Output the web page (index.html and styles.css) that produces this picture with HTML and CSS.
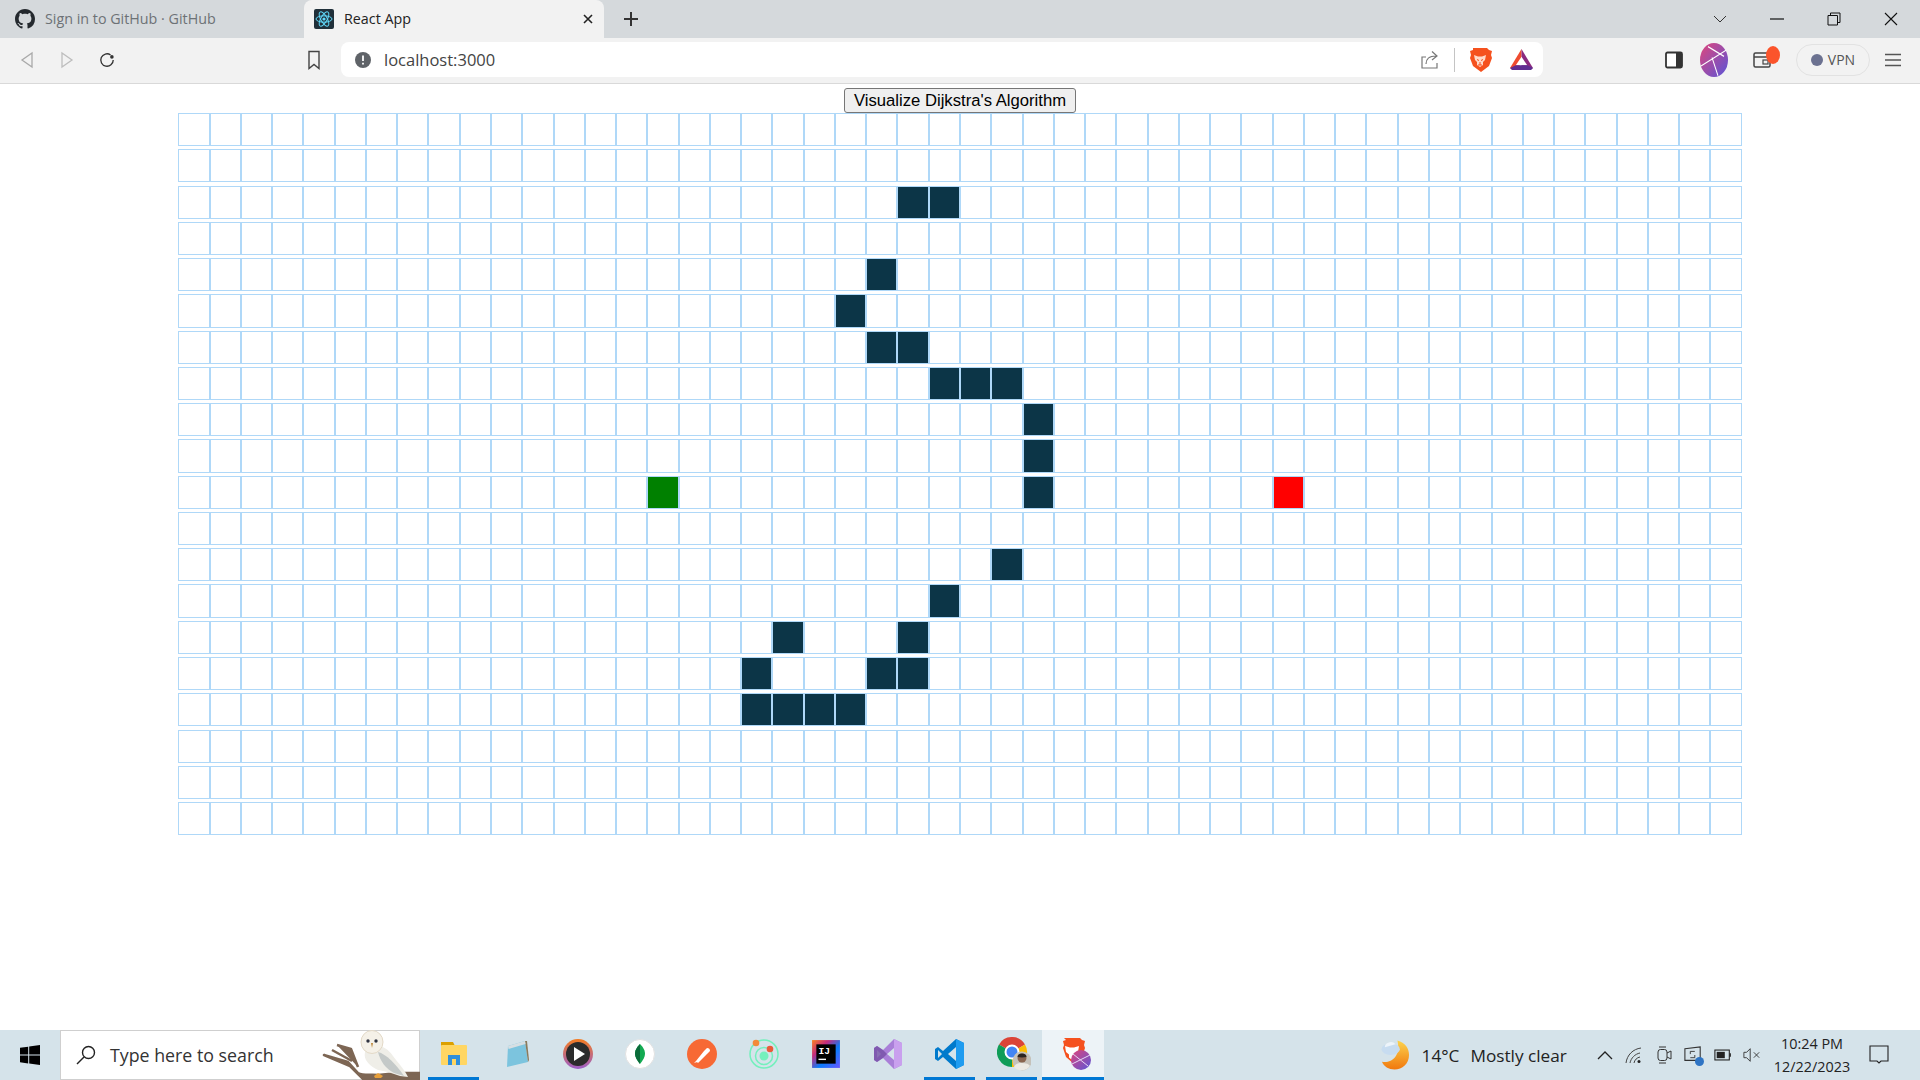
FILE: index.html
```html
<!DOCTYPE html>
<html lang="en">
<head>
  <meta charset="UTF-8">
  <meta name="viewport" content="width=device-width, initial-scale=1.0">
  <title>React App</title>
  <link rel="stylesheet" href="styles.css">
</head>
<body>
  <!-- Browser tabs -->
  <header class="tab-strip">
    <div class="tab">
      <svg class="favicon" viewBox="0 0 16 16"><path fill="#24292e" d="M8 0C3.58 0 0 3.58 0 8c0 3.54 2.29 6.53 5.47 7.59.4.07.55-.17.55-.38 0-.19-.01-.82-.01-1.49-2.01.37-2.53-.49-2.69-.94-.09-.23-.48-.94-.82-1.13-.28-.15-.68-.52-.01-.53.63-.01 1.08.58 1.23.82.72 1.21 1.87.87 2.33.66.07-.52.28-.87.51-1.07-1.78-.2-3.64-.89-3.64-3.95 0-.87.31-1.59.82-2.15-.08-.2-.36-1.02.08-2.12 0 0 .67-.21 2.2.82.64-.18 1.32-.27 2-.27s1.36.09 2 .27c1.53-1.04 2.2-.82 2.2-.82.44 1.1.16 1.92.08 2.12.51.56.82 1.27.82 2.15 0 3.07-1.87 3.75-3.65 3.95.29.25.54.73.54 1.48 0 1.07-.01 1.93-.01 2.2 0 .21.15.46.55.38A8.01 8.01 0 0 0 16 8c0-4.42-3.58-8-8-8z"/></svg>
      <span class="tab-title">Sign in to GitHub · GitHub</span>
    </div>
    <div class="tab tab-active">
      <svg class="favicon" viewBox="0 0 20 20"><rect width="20" height="20" rx="2" fill="#20303a"/><g fill="none" stroke="#61dafb" stroke-width="1"><ellipse cx="10" cy="10" rx="8" ry="3.2"/><ellipse cx="10" cy="10" rx="8" ry="3.2" transform="rotate(60 10 10)"/><ellipse cx="10" cy="10" rx="8" ry="3.2" transform="rotate(120 10 10)"/></g><circle cx="10" cy="10" r="1.6" fill="#61dafb"/></svg>
      <span class="tab-title">React App</span>
      <svg class="tab-close" viewBox="0 0 10 10"><path d="M1 1l8 8M9 1l-8 8" stroke="#222" stroke-width="1.6"/></svg>
    </div>
    <svg class="new-tab" viewBox="0 0 16 16"><path d="M8 1v14M1 8h14" stroke="#333" stroke-width="2"/></svg>
    <div class="window-controls">
      <svg viewBox="0 0 14 14"><path d="M1 4l6 6 6-6" fill="none" stroke="#333"/></svg>
      <svg viewBox="0 0 14 14"><path d="M0 7h14" stroke="#111" stroke-width="1.2"/></svg>
      <svg viewBox="0 0 14 14"><path d="M1 3.5h9.5V13H1zM3.5 3.5V1H13v9.5h-2.5" fill="none" stroke="#111"/></svg>
      <svg viewBox="0 0 14 14"><path d="M1 1l12 12M13 1L1 13" stroke="#111" stroke-width="1.1"/></svg>
    </div>
  </header>

  <!-- Address bar and toolbar -->
  <nav class="toolbar">
    <div class="nav-buttons">
      <svg viewBox="0 0 16 18"><path d="M13 2v14L3 9z" fill="none" stroke="#a9a9a9" stroke-width="1.3"/></svg>
      <svg viewBox="0 0 16 18"><path d="M3 2v14l10-7z" fill="none" stroke="#bdbdbd" stroke-width="1.3"/></svg>
      <svg viewBox="0 0 18 18"><path d="M16 9A7 7 0 1 1 13 3.3" fill="none" stroke="#333" stroke-width="1.5"/><circle cx="14.5" cy="5.5" r="2" fill="#333"/></svg>
    </div>
    <svg class="bookmark" viewBox="0 0 14 20"><path d="M2 1.5h10v17l-5-4-5 4z" fill="none" stroke="#444" stroke-width="1.4"/></svg>
    <div class="url-bar">
      <svg class="url-info" viewBox="0 0 16 16"><circle cx="8" cy="8" r="8" fill="#5f6368"/><path d="M8 3.5V9M8 10.8v1.7" stroke="#fff" stroke-width="1.8"/></svg>
      <span class="url-text">localhost:3000</span>
      <div class="url-actions">
        <svg class="url-share" viewBox="0 0 20 20"><path d="M6 7H2v11h15v-5" fill="none" stroke="#777" stroke-width="1.2"/><path d="M6 14c0-5 3-8 10-8M12 1.5L17 6l-5 4" fill="none" stroke="#777" stroke-width="1.2"/></svg>
        <span class="url-divider"></span>
        <svg class="url-lion" viewBox="0 0 24 24"><path d="M5 0h14l2 2 3 1-1 4 1 3-3 8-8 6-8-6-3-8 1-3-1-4 3-1z" fill="#f5511e"/><path d="M6 7l4 1.5h4L18 7l-1 5-2 2v3l-3 2-3-2v-3l-2-2z" fill="#ffd9c9"/><path d="M9 11.5l2 1M15 11.5l-2 1M12 14v3M10 17h4" stroke="#f5511e" stroke-width="1" fill="none"/></svg>
        <svg class="url-bat" viewBox="0 0 24 22"><path d="M12 0L0 20l3 2h6l3-14z" fill="#ef4b2f"/><path d="M12 0l12 20-3 2h-9V8z" fill="#8b2a7f"/><path d="M12 8l6 9H6z" fill="#fff"/><path d="M6 17h12l6 3-2 2H2l-2-2z" fill="#5f2d91"/></svg>
      </div>
    </div>
    <div class="toolbar-right">
      <svg class="panel-icon" viewBox="0 0 18 18"><rect x="1" y="1.5" width="16" height="15" rx="1.5" fill="#fff" stroke="#333" stroke-width="1.8"/><rect x="11" y="1.5" width="6" height="15" fill="#333"/></svg>
      <svg class="profile-icon" viewBox="0 0 28 28" preserveAspectRatio="none"><defs><linearGradient id="profileFill" x1="0" y1="0" x2="1" y2="1"><stop offset="0" stop-color="#e0457b"/><stop offset="1" stop-color="#5a55d8"/></linearGradient></defs><circle cx="14" cy="14" r="14" fill="url(#profileFill)"/><path d="M1 19L26 6M8 3l16 8M12 12l6 15" stroke="#fff" stroke-width="1" fill="none"/></svg>
      <div class="wallet">
        <svg viewBox="0 0 18 18"><rect x="1" y="2" width="16" height="14" rx="1.5" fill="none" stroke="#444" stroke-width="1.5"/><path d="M1 6h16" stroke="#444" stroke-width="1.5"/><rect x="10" y="9" width="5" height="4" fill="none" stroke="#444" stroke-width="1.2"/></svg>
        <span class="wallet-badge"></span>
      </div>
      <div class="vpn-pill"><span class="vpn-dot"></span>VPN</div>
      <svg class="menu-icon" viewBox="0 0 18 14"><path d="M1 1.5h16M1 7h16M1 12.5h16" stroke="#555" stroke-width="1.5"/></svg>
    </div>
  </nav>

  <!-- Page content -->
  <main class="page">
    <button class="visualize-btn">Visualize Dijkstra's Algorithm</button>
    <div class="grid" id="grid"></div>
  </main>

  <!-- Windows taskbar -->
  <footer class="taskbar">
    <div class="start-btn">
      <svg viewBox="0 0 20 20"><path fill="#000" d="M0 2.8l8.2-1.1v7.9H0zM9.2 1.5L20 0v9.6H9.2zM0 10.5h8.2v7.9L0 17.2zM9.2 10.5H20V20L9.2 18.5z"/></svg>
    </div>
    <div class="search-box">
      <svg class="search-icon" viewBox="0 0 20 20"><circle cx="12.5" cy="7.5" r="6" fill="none" stroke="#222" stroke-width="1.4"/><path d="M8 12l-7 7" stroke="#222" stroke-width="1.4"/></svg>
      <span class="search-text">Type here to search</span>
      <svg class="owl" viewBox="0 0 100 50">
        <path d="M4 25l24 7 10 11c6 3 14 1 20 2l20-2h22v7H44L30 36zM12 20l20 11M17 15l14 4 7 18" fill="#7d6654" stroke="#7d6654" stroke-width="2.5" stroke-linejoin="round"/>
        <path d="M45 22c6-10 20-8 28 4 6 8 12 14 15 21l-8-1-12-4-10-2c-8-4-15-10-13-18z" fill="#efeee8"/>
        <path d="M58 22c8 2 18 12 26 24l-10-3c-8-4-14-12-16-21z" fill="#c4c9c8"/>
        <ellipse cx="52" cy="12" rx="11" ry="11.5" fill="#f5f1e8" stroke="#e3d9c7"/>
        <circle cx="48" cy="11" r="1.7" fill="#2f3340"/>
        <circle cx="56" cy="11" r="1.7" fill="#2f3340"/>
        <path d="M51 13l1 5 1-5z" fill="#bd8a3f"/>
        <path d="M54 46l4-3 5 3-2 2h-6z" fill="#e8a03a"/>
      </svg>
    </div>
    <div class="task-icons">
      <div class="task-icon task-open">
        <svg viewBox="0 0 30 30"><path d="M2 3h12l2 4H2z" fill="#dca000"/><rect x="2" y="6" width="26" height="20" rx="1" fill="#ffd663"/><path d="M9 26V16h12v10h-4v-6h-4v6z" fill="#2f8fdc"/></svg>
      </div>
      <div class="task-icon">
        <svg viewBox="0 0 30 30"><path d="M7 7l17-5 3 21-21 5z" fill="#7cc4de"/><path d="M24 2l3 21 1-2-2-19z" fill="#8a7a5c"/><path d="M7 7l17-5 .5 3L7.5 10z" fill="#d7dfe3"/></svg>
      </div>
      <div class="task-icon">
        <svg viewBox="0 0 30 30"><defs><linearGradient id="playRing" x1="0" y1="0" x2="0" y2="1"><stop offset="0" stop-color="#f47b20"/><stop offset="1" stop-color="#9c5fc9"/></linearGradient></defs><circle cx="15" cy="15" r="15" fill="url(#playRing)"/><circle cx="15" cy="15" r="12" fill="#2b2b2b"/><path d="M11 8l11 7-11 7z" fill="#fff"/></svg>
      </div>
      <div class="task-icon">
        <svg viewBox="0 0 30 30"><circle cx="15" cy="15" r="14.5" fill="#fff" stroke="#e2e2e2"/><path d="M15 5c4 4 5 7 5 10s-2 6-5 10c-3-4-5-7-5-10s1-6 5-10z" fill="#13aa52"/><path d="M15 5c-4 4-5 7-5 10s2 6 5 10z" fill="#0b6b3a"/></svg>
      </div>
      <div class="task-icon">
        <svg viewBox="0 0 30 30"><circle cx="15" cy="15" r="15" fill="#f76935"/><path d="M9 22l8-10 3-3c2 0 3 1 3 3l-3 3-9 9zM7 24l2-2 1 1z" fill="#fff"/></svg>
      </div>
      <div class="task-icon">
        <svg viewBox="0 0 30 30"><circle cx="15" cy="15" r="14" fill="none" stroke="#74f0bd" stroke-width="1.5"/><circle cx="15" cy="17" r="8.5" fill="none" stroke="#74f0bd" stroke-width="1.5"/><circle cx="15" cy="17" r="4.5" fill="#74f0bd"/><circle cx="7" cy="4" r="3.3" fill="#f28a3a"/><circle cx="21" cy="10" r="3.3" fill="#ea5b3a"/></svg>
      </div>
      <div class="task-icon">
        <svg viewBox="0 0 28 28"><defs><linearGradient id="ijEdge" x1="0" y1="0" x2="1" y2="1"><stop offset="0" stop-color="#fc801d"/><stop offset=".3" stop-color="#c42b7d"/><stop offset=".6" stop-color="#087cfa"/><stop offset="1" stop-color="#6b57ff"/></linearGradient></defs><rect width="26" height="26" x="1" y="1" fill="url(#ijEdge)"/><rect x="5" y="5" width="18" height="18" fill="#000"/><text class="ij-text" x="7" y="14">IJ</text><path d="M7 19h7" stroke="#fff" stroke-width="1.3"/></svg>
      </div>
      <div class="task-icon">
        <svg viewBox="0 0 30 30"><path d="M21 0l8 4v22l-8 4-11-11-6 4-3-2V9l3-2 6 4z" fill="#a97fd8"/><path d="M21 0l8 4v22l-8 4z" fill="#c9a0ee"/><path d="M4 11v8l4-4zM21 9l-7 6 7 6z" fill="#d5e3ea"/><path d="M1 9l3-2 6 4 4 4-4 4-6 4-3-2z" fill="#7551a6" opacity=".8"/></svg>
      </div>
      <div class="task-icon task-open">
        <svg viewBox="0 0 30 30"><path d="M21 0l8 4v22l-8 4L8 18l-5 4-3-2V10l3-2 5 4z" fill="#007acc"/><path d="M21 0l8 4v22l-8 4z" fill="#1f9cf0"/><path d="M21 8l-8 7 8 7z" fill="#d5e3ea"/><path d="M3 11v8l4-4z" fill="#d5e3ea"/></svg>
      </div>
      <div class="task-icon task-open">
        <svg class="chrome-icon" viewBox="0 0 34 34">
          <path d="M15 15L2 7.5A15 15 0 0 1 28 7.5z" fill="#db4437"/>
          <path d="M15 15L2 7.5A15 15 0 0 0 15 30z" fill="#0f9d58"/>
          <path d="M15 15L28 7.5A15 15 0 0 1 15 30z" fill="#fbbc05"/>
          <circle cx="15" cy="15" r="6.5" fill="#4285f4" stroke="#fff" stroke-width="2"/>
          <circle cx="25" cy="24" r="9.5" fill="#c5c2ba"/>
          <circle cx="25" cy="21" r="4.5" fill="#8a6650"/>
          <path d="M25 16.500c-3 0-4.500 1.500-4.500 3.500 3 .5 6 .5 9 0 0-2-1.500-3.500-4.500-3.500z" fill="#2a2421"/>
          <path d="M17 30c1-3 4-4 8-4s7 1 8 3c-3 5-12 6-16 1z" fill="#eceae4"/>
        </svg>
      </div>
      <div class="task-icon task-open task-active">
        <svg class="chrome-icon" viewBox="0 0 34 34">
          <path d="M6 1h16l2 2 3 1-1 4 1 3-3 9-8 7-8-7-3-9 1-3-1-4 3-1z" fill="#f5511e"/>
          <path d="M7 9l5 1.5h4l5-1.5-1 6-3 2.5v3L14 23l-3-2.5v-3L8 15z" fill="#fff"/>
          <circle cx="23" cy="23" r="10" fill="url(#profileFill)"/>
          <path d="M14 27l18-9M15 17l15 12" stroke="#e6d6f5" stroke-width="1"/>
        </svg>
      </div>
    </div>
    <div class="tray">
      <svg class="weather-icon" viewBox="0 0 30 32"><defs><linearGradient id="moonFill" x1="0" y1="0" x2="0" y2="1"><stop offset="0" stop-color="#fcd34d"/><stop offset="1" stop-color="#f1780d"/></linearGradient></defs><path d="M17 1c8 2 12 8 12 15 0 9-7 15-15 15C8 31 3 28 1 23c9 2 20-5 16-22z" fill="url(#moonFill)"/><ellipse cx="10" cy="10" rx="9.5" ry="6" fill="#c7dcf0"/><path d="M4 8a6 5 0 0 1 11-3z" fill="#edf4fa"/></svg>
      <span class="weather-temp">14°C</span>
      <span class="weather-text">Mostly clear</span>
      <svg class="tray-icon tray-chevron" viewBox="0 0 18 18"><path d="M2 13l7-7 7 7" fill="none" stroke="#222" stroke-width="1.3"/></svg>
      <svg class="tray-icon" viewBox="0 0 18 18"><path d="M1 17C2 9 8 3 16 2M5 17c1-5 5-9 10-10M9 17c.5-3 3-5.5 6-6" fill="none" stroke="#444"/><circle cx="14" cy="15.5" r="1.5" fill="#222"/></svg>
      <svg class="tray-icon" viewBox="0 0 18 18"><rect x="3" y="3.5" width="9" height="11" rx="2.5" fill="none" stroke="#333"/><path d="M12 7l4-2v8l-4-2M4 1h7M4 17h7" fill="none" stroke="#333"/></svg>
      <div class="tray-share">
        <svg class="tray-icon" viewBox="0 0 20 20"><path d="M1 3l17-2v15H1z" fill="none" stroke="#333" stroke-width="1.2"/><path d="M12 6H7v3M7 13h5v-3" fill="none" stroke="#333"/></svg>
        <span class="tray-dot"></span>
      </div>
      <svg class="tray-icon" viewBox="0 0 20 14"><rect x="1" y="1.5" width="16" height="11" fill="none" stroke="#222" stroke-width="1.2"/><rect x="3" y="3.5" width="9" height="7" fill="#222"/><path d="M18 5v4" stroke="#222" stroke-width="1.5"/></svg>
      <svg class="tray-icon" viewBox="0 0 20 18"><path d="M1 6h3l4-4v14l-4-4H1zM12 6l6 6M18 6l-6 6" fill="none" stroke="#333"/></svg>
      <div class="clock">
        <span>10:24 PM</span>
        <span>12/22/2023</span>
      </div>
      <svg class="notify-icon" viewBox="0 0 20 20"><path d="M1 1h18v15h-7l-2 2-2-2H1z" fill="none" stroke="#222" stroke-width="1.1"/></svg>
    </div>
  </footer>

  <script src="script.js"></script>
</body>
</html>
```

FILE: styles.css
```css
/* General styles */
* {
  box-sizing: border-box;
}

body {
  margin: 0;
  height: 100vh;
  display: flex;
  flex-direction: column;
  overflow: hidden;
  font-family: "Open Sans", "Noto Sans", sans-serif;
  background-color: #fff;
  color: #222;
}

svg {
  display: block;
  flex-shrink: 0;
}

/* Tab strip */
.tab-strip {
  height: 38px;
  display: flex;
  align-items: center;
  background-color: #d5d9dc;
}

.tab {
  width: 304px;
  height: 38px;
  display: flex;
  align-items: center;
  padding: 0 10px 0 15px;
  font-size: 14.3px;
  color: #6d7276;
}

.tab-active {
  width: 300px;
  padding-left: 10px;
  background-color: #f2f2f2;
  border-radius: 8px 8px 0 0;
  color: #222;
}

.favicon {
  width: 20px;
  height: 20px;
  margin-right: 10px;
}

.tab-title {
  white-space: nowrap;
  padding-bottom: 2px;
}

.tab-close {
  width: 10px;
  height: 10px;
  margin-left: auto;
  margin-right: 1px;
}

.new-tab {
  width: 16px;
  height: 16px;
  margin-left: 19px;
}

.window-controls {
  margin-left: auto;
  display: flex;
  align-items: center;
  gap: 43px;
  padding-right: 22px;
}

.window-controls svg {
  width: 14px;
  height: 14px;
}

/* Toolbar */
.toolbar {
  height: 46px;
  display: flex;
  align-items: center;
  padding: 0 0 2px 0;
  background-color: #f2f2f2;
  border-bottom: 1px solid #d9d9d9;
}

.nav-buttons {
  display: flex;
  align-items: center;
  gap: 24px;
  padding-left: 19px;
}

.nav-buttons svg {
  width: 16px;
  height: 18px;
}

.bookmark {
  width: 14px;
  height: 20px;
  margin-left: 192px;
}

.url-bar {
  width: 1202px;
  height: 35px;
  margin-left: 20px;
  padding: 0 10px 0 14px;
  display: flex;
  align-items: center;
  background-color: #fff;
  border-radius: 8px;
}

.url-info {
  width: 16px;
  height: 16px;
  margin-right: 13px;
}

.url-text {
  font-size: 16.5px;
  color: #444;
}

.url-actions {
  margin-left: auto;
  display: flex;
  align-items: center;
}

.url-share {
  width: 20px;
  height: 20px;
}

.url-divider {
  width: 1px;
  height: 24px;
  margin: 0 13px 0 14px;
  background-color: #c4c4c4;
}

.url-lion {
  width: 24px;
  height: 24px;
}

.url-bat {
  width: 23px;
  height: 21px;
  margin-left: 18px;
}

.toolbar-right {
  display: flex;
  align-items: center;
  margin-left: auto;
  padding-right: 18px;
}

.panel-icon {
  width: 18px;
  height: 18px;
}

.profile-icon {
  width: 28px;
  height: 34px;
  margin-left: 17px;
}

.wallet {
  position: relative;
  margin-left: 25px;
}

.wallet svg {
  width: 18px;
  height: 18px;
}

.wallet-badge {
  position: absolute;
  top: -5px;
  right: -9px;
  width: 14px;
  height: 18px;
  border-radius: 50%;
  background-color: #fb542b;
}

.vpn-pill {
  width: 74px;
  height: 32px;
  margin-left: 25px;
  display: flex;
  align-items: center;
  justify-content: center;
  gap: 5px;
  border: 1px solid #e2e2e2;
  border-radius: 16px;
  font-size: 14px;
  color: #555;
}

.vpn-dot {
  width: 12px;
  height: 12px;
  border-radius: 50%;
  background-color: #6b7190;
}

.menu-icon {
  width: 18px;
  height: 14px;
  margin-left: 14px;
}

/* Page content */
.page {
  flex: 1;
  display: flex;
  flex-direction: column;
  align-items: center;
  padding-top: 4px;
}

.visualize-btn {
  width: 232px;
  height: 25px;
  padding: 0;
  font-family: "Liberation Sans", Arial, sans-serif;
  font-size: 16.67px;
  color: #000;
  background-color: #efefef;
  border: 1px solid #767676;
  border-radius: 3px;
}

.grid {
  display: grid;
  grid-template-columns: repeat(50, 31.28px);
  grid-auto-rows: 33.2px;
  row-gap: 3.08px;
}

.node {
  border: 1px solid #afd8f8;
  background-color: #fff;
}

.node-wall {
  background-color: #0c3547;
}

.node-start {
  background-color: #008000;
}

.node-finish {
  background-color: #ff0000;
}

/* Taskbar */
.taskbar {
  height: 50px;
  display: flex;
  align-items: center;
  background-color: #d5e3ea;
}

.start-btn {
  width: 60px;
  display: flex;
  justify-content: center;
}

.start-btn svg {
  width: 20px;
  height: 20px;
}

.search-box {
  position: relative;
  width: 360px;
  height: 50px;
  display: flex;
  align-items: center;
  padding-left: 15px;
  background-color: #fff;
  border: 1px solid #cfcfcf;
}

.search-icon {
  width: 20px;
  height: 20px;
}

.search-text {
  margin-left: 14px;
  font-size: 17.8px;
  color: #333;
}

.owl {
  position: absolute;
  right: -1px;
  top: -1px;
  width: 100px;
  height: 50px;
}

.task-icons {
  display: flex;
  margin-left: 8px;
  gap: 11px;
}

.task-icon {
  width: 51px;
  height: 50px;
  display: flex;
  align-items: center;
  justify-content: center;
  border-bottom: 3px solid transparent;
}

.task-icon svg {
  width: 30px;
  height: 30px;
}

.task-icon .chrome-icon {
  width: 34px;
  height: 34px;
  margin: 1px 0 0 4px;
}

.task-open {
  border-bottom-color: #0078d4;
}

.task-active {
  width: 62px;
  margin-left: -6px;
  background-color: #edf3f7;
}

.ij-text {
  font-family: "Liberation Mono", monospace;
  font-size: 9px;
  font-weight: bold;
  fill: #fff;
}

.tray {
  margin-left: auto;
  display: flex;
  align-items: center;
  color: #222;
}

.weather-icon {
  width: 29px;
  height: 32px;
  margin-right: 12px;
}

.weather-temp {
  font-size: 17.2px;
  margin-right: 11px;
}

.weather-text {
  font-size: 17.2px;
  margin-right: 23px;
}

.tray-icon {
  width: 18px;
  height: 18px;
  margin: 0 5.75px;
}

.tray-chevron {
  margin-right: 6px;
}

.tray-share {
  position: relative;
}

.tray-dot {
  position: absolute;
  right: 4px;
  bottom: -2px;
  width: 9px;
  height: 9px;
  border-radius: 50%;
  background-color: #2e74c4;
}

.clock {
  width: 90px;
  display: flex;
  flex-direction: column;
  align-items: center;
  gap: 4px;
  font-size: 14.4px;
  line-height: 19px;
}

.notify-icon {
  width: 20px;
  height: 20px;
  margin: 0 31px 0 12px;
}
```

FILE: script.js
```js
// Board size and start / finish cells
const ROWS = 20;
const COLS = 50;
const START = '10,15';
const FINISH = '10,35';

// Walls drawn on the board, by row
const walls = {
  2: [23, 24],
  4: [22],
  5: [21],
  6: [22, 23],
  7: [24, 25, 26],
  8: [27],
  9: [27],
  10: [27],
  12: [26],
  13: [24],
  14: [19, 23],
  15: [18, 22, 23],
  16: [18, 19, 20, 21]
};

const grid = document.getElementById('grid');

for (let row = 0; row < ROWS; row++) {
  for (let col = 0; col < COLS; col++) {
    const node = document.createElement('div');
    node.classList.add('node');
    if (`${row},${col}` === START) node.classList.add('node-start');
    if (`${row},${col}` === FINISH) node.classList.add('node-finish');
    if (walls[row] && walls[row].includes(col)) node.classList.add('node-wall');
    grid.appendChild(node);
  }
}
```
